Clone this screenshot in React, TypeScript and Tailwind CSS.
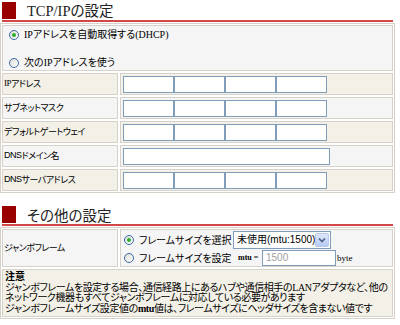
const jp = "font-['Noto_Sans_CJK_JP',sans-serif] [font-feature-settings:'palt']";
const mixed = "font-['Liberation_Serif','Noto_Sans_CJK_JP',serif] [font-feature-settings:'palt']";
const cell = "border border-[#d6d2ca]";

function Radio({ checked = false }: { checked?: boolean }) {
	return (
		<span className="flex h-[10px] w-[10px] shrink-0 items-center justify-center rounded-full border border-[#3d6aa8] bg-gradient-to-br from-[#dcdcd6] to-white">
			{checked && <span className="h-[4px] w-[4px] rounded-full bg-[#2fae2f]"></span>}
		</span>
	)
}

function Heading({ children }: { children: React.ReactNode }) {
	return (
		<div className="ml-[2px] flex h-[20px] w-[391px] items-end border-b-2 border-[#d04848]">
			<div className="mb-[1px] h-[17px] w-[14px] shrink-0 bg-[#990000]"></div>
			<div className="mb-[1px] ml-[11px] text-[14.5px] leading-[16px] text-[#222]">{children}</div>
		</div>
	)
}

function Boxes() {
	return (
		<div className="flex">
			{Array.from({ length: 4 }).map((_, i) => (
				<div key={i} className="h-[17px] w-[51px] border border-[#7f9db9] bg-white"></div>
			))}
		</div>
	)
}

const rows = [
	{ label: <><span className="font-['Liberation_Serif',serif]">IP</span>アドレス</>, kind: "ip", bg: "bg-[#f3f0e7]" },
	{ label: <>サブネットマスク</>, kind: "ip", bg: "bg-[#f5f5f5]" },
	{ label: <>デフォルトゲートウェイ</>, kind: "ip", bg: "bg-[#f3f0e7]" },
	{ label: <><span className="font-['Liberation_Sans',sans-serif]">DNS</span>ドメイン名</>, kind: "text", bg: "bg-[#f5f5f5]" },
	{ label: <><span className="font-['Liberation_Sans',sans-serif]">DNS</span>サーバアドレス</>, kind: "ip", bg: "bg-[#f3f0e7]" },
]

export default function App() {
	return (
		<div className={`h-[325px] w-[400px] overflow-hidden bg-white pt-[2px] text-black ${jp}`}>
			<Heading>
				<span className="font-['Liberation_Serif',serif]">TCP/IP</span>の設定
			</Heading>

			<div className="mt-[1px] flex w-[395px] flex-col gap-[2px] border border-[#d6d2ca] p-[1px]">
				<div className={`${cell} flex h-[46px] flex-col bg-[#f5f5f5] pl-[6px] pt-[3px] text-[10px] leading-[12px]`}>
					<div className="flex h-[12px] items-center gap-[5px]">
						<Radio checked />
						<span className={mixed}>IPアドレスを自動取得する(DHCP)</span>
					</div>
					<div className="mt-[16px] flex h-[12px] items-center gap-[5px]">
						<Radio />
						<span className={mixed}>次のIPアドレスを使う</span>
					</div>
				</div>

				{rows.map((r, i) => (
					<div key={i} className="grid grid-cols-[116px_273px] gap-[2px]">
						<div className={`${cell} ${r.bg} flex h-[22px] items-center pl-[1px] text-[9px] tracking-[-0.5px]`}>
							{r.label}
						</div>
						<div className={`${cell} ${r.bg} flex h-[22px] items-center pl-[2px]`}>
							{r.kind === "ip" ? (
								<Boxes />
							) : (
								<div className="h-[17px] w-[207px] border border-[#7f9db9] bg-white"></div>
							)}
						</div>
					</div>
				))}
			</div>

			<div className="mt-[13px]">
				<Heading>その他の設定</Heading>
			</div>

			<div className="mt-[1px] flex w-[395px] flex-col gap-[2px] border border-[#d6d2ca] p-[1px]">
				<div className="grid grid-cols-[116px_273px] gap-[2px]">
					<div className={`${cell} flex h-[38px] items-center bg-[#f5f5f5] pl-[1px] text-[9px] tracking-[-0.5px]`}>
						ジャンボフレーム
					</div>
					<div className={`${cell} flex h-[38px] flex-col bg-[#f5f5f5] pl-[3px] pt-[1px] text-[10px] leading-[12px]`}>
						<div className="flex h-[18px] items-center">
							<Radio checked />
							<span className="ml-[5px] w-[94px] whitespace-nowrap">フレームサイズを選択</span>
							<div className="flex h-[18px] w-[98px] items-center whitespace-nowrap border border-[#7f9db9] bg-white pl-[3px] text-[10px]">
								<span className="flex-1 font-['Liberation_Sans','Noto_Sans_CJK_JP',sans-serif]">未使用(mtu:1500)</span>
								<span className="mr-[1px] flex h-[14px] w-[15px] items-center justify-center rounded-[2px] border border-[#b6c8ec] bg-gradient-to-b from-[#dde7fb] to-[#b7cbf5]">
									<svg width="8" height="6" viewBox="0 0 8 6">
										<path d="M1 1.5 L4 4.5 L7 1.5" fill="none" stroke="#4d6185" strokeWidth="1.6" />
									</svg>
								</span>
							</div>
						</div>
						<div className="flex h-[17px] items-center">
							<Radio />
							<span className="ml-[5px] w-[99px] whitespace-nowrap">フレームサイズを設定</span>
							<span className="w-[24px] whitespace-nowrap font-['Liberation_Serif',serif] text-[8px] font-bold">mtu =</span>
							<div className="flex h-[16px] w-[74px] items-center border border-[#7f9db9] bg-white pl-[3px] font-['Liberation_Sans',sans-serif] text-[10px] text-[#a0a0a0]">
								1500
							</div>
							<span className="ml-[1px] font-['Liberation_Serif',serif] text-[9px]">byte</span>
						</div>
					</div>
				</div>
				<div className={`${cell} h-[48px] bg-[#f3f0e7] px-[2px] pt-[1px] text-[10px] leading-[10px] ${mixed}`}>
					<div className="font-bold leading-[12px]">注意</div>
					<div className="tracking-[-0.4px]">ジャンボフレームを設定する場合、通信経路上にあるハブや通信相手のLANアダプタなど、他の</div>
					<div className="tracking-[-0.4px]">ネットワーク機器もすべてジャンボフレームに対応している必要があります</div>
					<div className="mt-[1px] tracking-[-0.4px]">ジャンボフレームサイズ設定値の<b>mtu</b>値は、フレームサイズにヘッダサイズを含まない値です</div>
				</div>
			</div>
		</div>
	)
}
